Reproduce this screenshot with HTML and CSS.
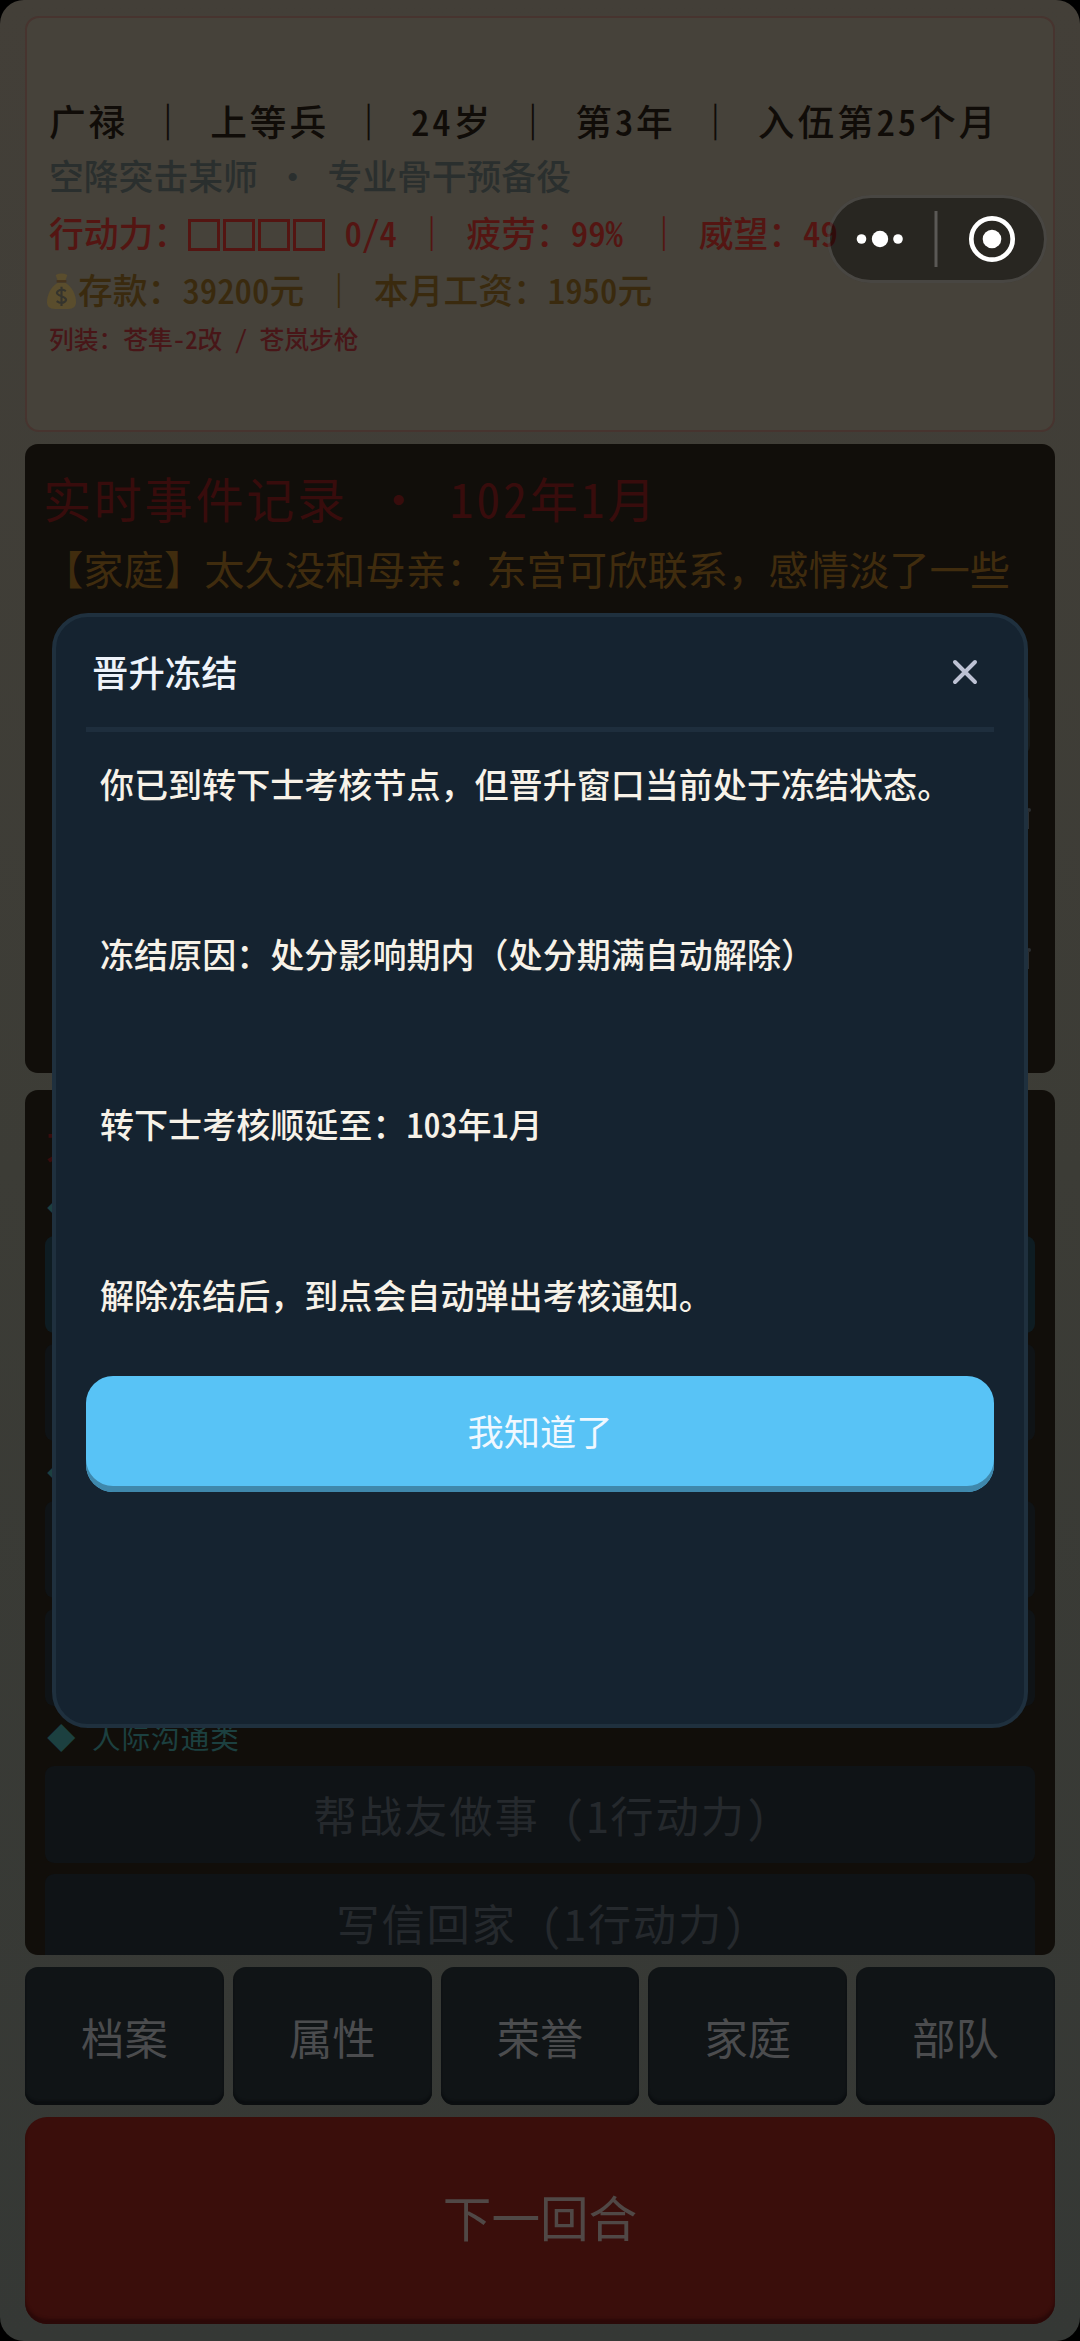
FILE: index.html
```html
<!DOCTYPE html>
<html lang="zh-CN">
<head>
<meta charset="utf-8">
<title>晋升冻结</title>
<link rel="stylesheet" href="styles.css">
</head>
<body>
<div class="app">
  <header class="status">
    <p class="line name">广禄 <b>｜</b> 上等兵 <b>｜</b> 24岁 <b>｜</b> 第3年 <b>｜</b> 入伍第25个月</p>
    <p class="line unit">空降突击某师 <span class="mid">·</span> 专业骨干预备役</p>
    <p class="line power">行动力：<span class="boxes"><i></i><i></i><i></i><i></i></span> 0/4 <b>｜</b> 疲劳：99<span class="pct">%</span> <b>｜</b> 威望：49</p>
    <p class="line money"><svg class="bag" viewBox="0 0 32 38"><path d="M10 2Q16-1 22 2L20 8H12Z" fill="#5a4d2d"/><path d="M12 10H20C27 14 31 23 31 30Q31 37 23 37H9Q1 37 1 30C1 23 5 14 12 10Z" fill="#5a4d2d"/><path d="M11 8.500H21" stroke="#46331d" stroke-width="2.500"/><path d="M20.500 18.500Q16 15.500 12.500 18.500T16 24T19.500 29.500Q16 32.500 11 29M16 14V34" fill="none" stroke="#35342d" stroke-width="2.200"/></svg>存款：39200元 <b>｜</b> 本月工资：1950元</p>
    <p class="line gear">列装：苍隼-2改 / 苍岚步枪</p>
  </header>

  <section class="panel log">
    <h2 class="heading">实时事件记录 <span class="mid">·</span> 102年1月</h2>
    <p class="event">【家庭】太久没和母亲：东宫可欣联系<b>，</b>感情淡了一些</p>
    <div class="entry"></div>
    <div class="tick"></div>
    <div class="tick"></div>
  </section>

  <section class="panel actions">
    <h2 class="heading">不</h2>
    <h3 class="group">◆</h3>
    <div class="action active"></div>
    <div class="action"></div>
    <h3 class="group">◆</h3>
    <div class="action"></div>
    <div class="action"></div>
    <h3 class="group">◆ 人际沟通类</h3>
    <div class="action">帮战友做事 (1行动力)</div>
    <div class="action">写信回家 (1行动力)</div>
  </section>

  <nav class="tabs">
    <button class="tab">档案</button>
    <button class="tab">属性</button>
    <button class="tab">荣誉</button>
    <button class="tab">家庭</button>
    <button class="tab">部队</button>
  </nav>
  <button class="next">下一回合</button>
</div>

<div class="capsule">
  <svg width="220" height="88" viewBox="0 0 220 88">
    <circle cx="34.500" cy="44" r="4.800" fill="#fff"/><circle cx="53" cy="44" r="8.200" fill="#fff"/><circle cx="71" cy="44" r="4.800" fill="#fff"/>
    <path d="M109 16V72" stroke="#5b5956" stroke-width="3"/>
    <circle cx="165" cy="44" r="20.700" fill="none" stroke="#fff" stroke-width="4.700"/><circle cx="165" cy="44" r="9.300" fill="#fff"/>
  </svg>
</div>

<div class="modal">
  <div class="modal-head">
    <span>晋升冻结</span>
    <svg class="close" width="26" height="26" viewBox="0 0 26 26"><path d="M3 3L23 23M23 3L3 23" stroke="#bdc2d4" stroke-width="4" stroke-linecap="round"/></svg>
  </div>
  <div class="modal-body">
    <p>你已到转下士考核节点<b>，</b>但晋升窗口当前处于冻结状态。</p>
    <p>冻结原因：处分影响期内<b>（</b>处分期满自动解除<b>）</b></p>
    <p>转下士考核顺延至：103年1月</p>
    <p>解除冻结后<b>，</b>到点会自动弹出考核通知。</p>
  </div>
  <button class="confirm">我知道了</button>
</div>
</body>
</html>
```
FILE: styles.css
```css
* { box-sizing: border-box; margin: 0; padding: 0; }
html { background: #000; }
body {
  width: 1080px; height: 2341px; overflow: hidden; position: relative;
  font-family: "Noto Sans CJK SC", sans-serif;
  font-feature-settings: "hwid";
  background: #000;
}
button { border: 0; font: inherit; font-feature-settings: inherit; }
h2, h3 { font-weight: 400; }
/* full-width punctuation inside half-width runs */
b { font-weight: inherit; font-feature-settings: normal; }
.line b { font-weight: 900; }
.app {
  height: 2341px; border-radius: 24px;
  padding: 16px 25px;
  background: linear-gradient(#433f38, #3c3c36 50%, #353835);
}
.line, .event, .heading, .group { white-space: nowrap; }
.mid { display: inline-block; width: 1em; text-align: center; }
.pct { margin-right: 6px; }

.status {
  height: 416px; padding: 74px 0 0 22px;
  border: 2px solid #47342f; border-radius: 14px; background: #46423a;
}
.line { height: 57px; line-height: 57px; font-size: 34.8px; font-weight: 500; }
.name { height: 55px; font-size: 36.7px; letter-spacing: 2.9px; color: #100c08; }
.unit { color: #2a2f2e; }
.power { color: #541512; }
.money { color: #3a2a0e; }
.gear { height: 40px; line-height: 40px; font-size: 24.75px; color: #481618; }
.boxes { display: inline-flex; width: 139px; gap: 3px; vertical-align: -4px; }
.boxes i { width: 32px; height: 32px; border: 3px solid #541512; }
.bag { width: 31px; height: 37px; margin: 0 1px 0 -3px; vertical-align: -6px; }

.panel { border-radius: 13px; overflow: hidden; background: #110e0a; }
.log { margin-top: 12px; height: 629px; padding: 17px 18px; }
.heading { height: 73px; line-height: 72px; font-size: 48px; letter-spacing: 2.8px; color: #380c0c; }
.event { height: 68px; line-height: 68px; font-size: 40.3px; color: #402c0e; }
.entry { width: 974px; height: 60px; margin: 92px 0 0 13px; border-radius: 8px; background: #171a19; }
.tick {
  width: 2px; height: 21px; margin: 54px 0 0 984px;
  border-top: 4px dotted #2b2e31; background: #2b2e31; background-clip: padding-box;
}
.tick + .tick { margin-top: 119px; }

.actions { margin-top: 17px; height: 865px; padding: 24px 20px 0; }
.group { height: 49px; padding-left: 2px; line-height: 40px; font-size: 28.6px; letter-spacing: 1px; color: #1c4040; }
.action {
  height: 97px; margin-bottom: 11px; border-radius: 9px; background: #0f1316;
  font-size: 43.3px; line-height: 96px; letter-spacing: 1.9px; text-indent: 3px; text-align: center; color: #25292d;
}
.active { background: #0e1c22; }

.tabs { display: grid; grid-template-columns: repeat(5, 1fr); gap: 9px; margin-top: 12px; }
.tab {
  height: 138px; border-radius: 13px; font-size: 43.3px; color: #4b4c4e;
  background: #101416; box-shadow: inset 0 -4px 2px #0b0e10;
}
.next {
  display: block; width: 100%; height: 207px; margin-top: 12px; padding-bottom: 10px; border-radius: 22px;
  font-size: 48.6px; color: #504846; background: #3a0e0b; box-shadow: inset 0 -5px 3px #2b0908;
}

.capsule {
  position: absolute; left: 827px; top: 195px; width: 220px; height: 88px;
  border-radius: 44px; background: rgba(0, 0, 0, .42);
  box-shadow: inset 0 0 0 3px rgba(255, 255, 255, .15);
}
.capsule svg { display: block; }

.modal {
  position: absolute; left: 52px; top: 613px; width: 976px; height: 1115px;
  padding: 0 30px; border: 4px solid #1f303e; border-radius: 36px; background: #152330;
}
.modal-head {
  display: flex; align-items: center; justify-content: space-between;
  height: 115px; padding: 0 16px 0 6px; border-bottom: 5px solid #1e2e3d;
  font-size: 36.4px; font-weight: 500; color: #eef3fa;
}
.modal-head span { padding-bottom: 2px; }
.modal-body { height: 644px; padding: 27px 0 0 14px; }
.modal-body p {
  height: 50px; line-height: 50px; margin-bottom: 120.2px;
  font-size: 34.05px; font-weight: 500; color: #f7f2e8; white-space: nowrap;
}
.confirm {
  display: block; width: 908px; height: 116px; padding-bottom: 8px; border-radius: 27px;
  font-size: 36.3px; color: #f0f8ff; background: #58c3f6; box-shadow: inset 0 -6px 0 #3f88ac;
}
```
